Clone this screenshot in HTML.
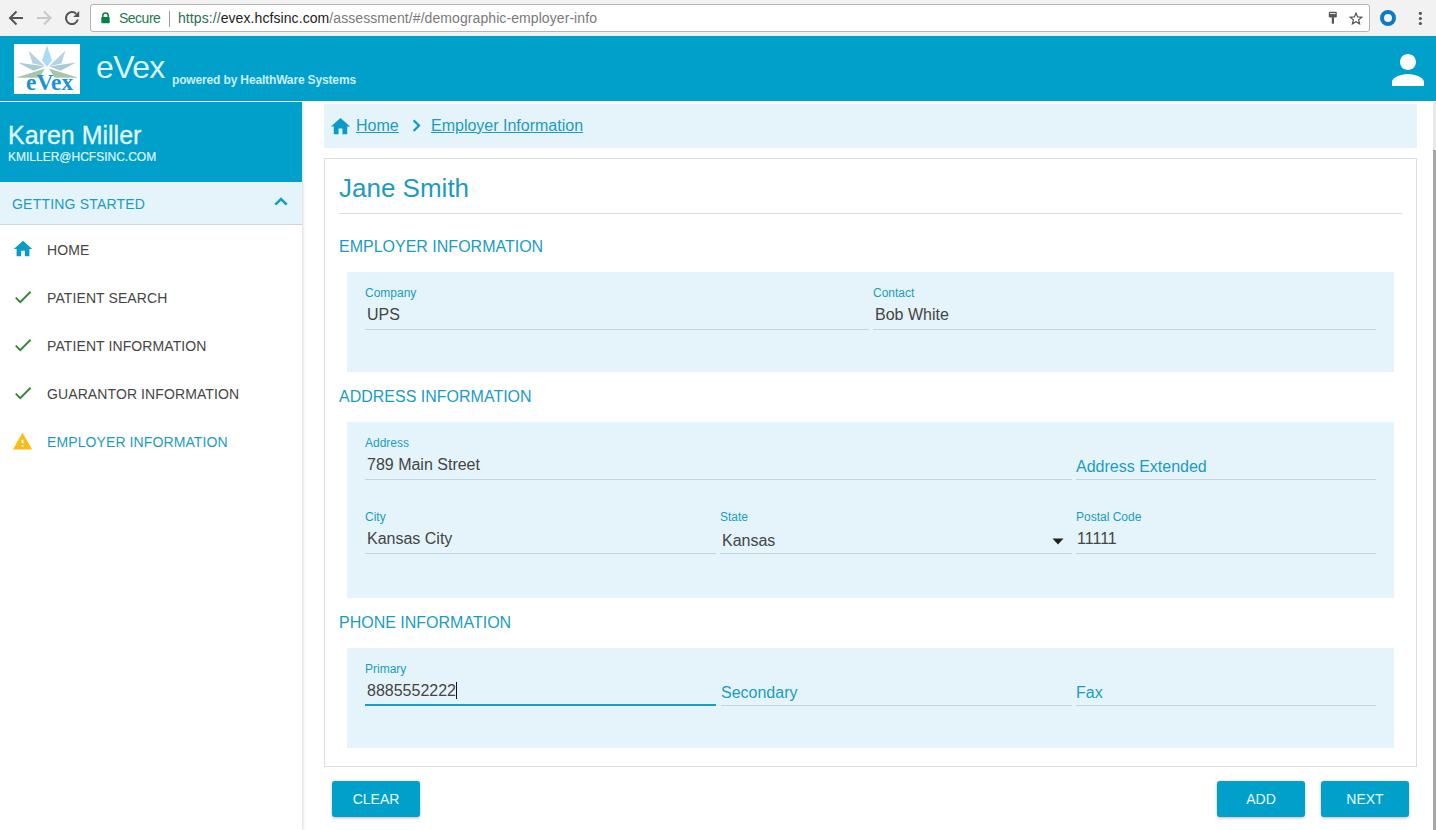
<!DOCTYPE html>
<html><head><meta charset="utf-8">
<style>
*{box-sizing:border-box;margin:0;padding:0}
html,body{width:1436px;height:830px;overflow:hidden;background:#fff;font-family:"Liberation Sans",sans-serif}
.abs{position:absolute;white-space:nowrap}
#chrome{position:absolute;left:0;top:0;width:1436px;height:35px;background:#f2f2f2}
#omni{position:absolute;left:90px;top:4px;width:1280px;height:28px;background:#fff;border:1px solid #b4b4b4;border-radius:3px}
#hdr{position:absolute;left:0;top:35px;width:1436px;height:66px;background:#01a0ca;border-top:1px solid #dff5fb}
#sep{position:absolute;left:0;top:101px;width:1436px;height:1px;background:#c8f4fa}
#side{position:absolute;left:0;top:102px;width:302px;height:728px;background:#fff;box-shadow:1px 0 3px rgba(0,0,0,.16)}
#user{position:absolute;left:0;top:0;width:302px;height:80px;background:#01a0ca}
#gs{position:absolute;left:0;top:80px;width:302px;height:43px;background:#e5f4fa;border-bottom:1px solid #c9d6dc}
.nav{position:absolute;left:47px;font-size:14px;color:#464646;letter-spacing:.1px;white-space:nowrap}
.ico{position:absolute}
.lbl{position:absolute;font-size:12px;color:#1a9cc2;white-space:nowrap}
.val{position:absolute;font-size:16px;color:#444;white-space:nowrap}
.ph{position:absolute;font-size:16px;color:#1a9cc2;white-space:nowrap}
.line{position:absolute;height:1px;background:#c3d5dc}
.panel{position:absolute;left:347px;width:1047px;background:#e5f4fa}
.sect{position:absolute;left:339px;font-size:16px;color:#1a9cc2;white-space:nowrap}
.btn{position:absolute;top:781px;height:36px;background:#01a0ca;color:#e6fbff;font-size:14px;text-align:center;line-height:36px;border-radius:3px;box-shadow:0 1px 3px rgba(0,0,0,.28)}
</style></head><body>
<div id="chrome">
  <svg class="ico" style="left:0;top:0" width="90" height="35" viewBox="0 0 90 35">
    <g fill="none" stroke="#555" stroke-width="2" stroke-linecap="butt">
      <path d="M23 18H10.5M16.5 11.5L10 18l6.5 6.5"/>
    </g>
    <g fill="none" stroke="#c8c8c8" stroke-width="2">
      <path d="M37 18h12.5M44 11.5l6.5 6.5-6.5 6.5"/>
    </g>
    <path d="M77.8 19.6A6 6 0 1 1 76.2 13.8" fill="none" stroke="#555" stroke-width="2"/>
    <path d="M79.2 11v5.9h-6z" fill="#555"/>
  </svg>
  <div id="omni">
    <svg class="ico" style="left:9px;top:7px" width="11" height="13" viewBox="0 0 11 13">
      <path d="M2.8 5V3.6a2.7 2.7 0 0 1 5.4 0V5" fill="none" stroke="#0b8043" stroke-width="1.5"/>
      <rect x="1.3" y="5" width="8.4" height="6.3" rx=".8" fill="#0b8043"/>
    </svg>
    <div class="abs" style="left:28px;top:5px;font-size:14px;color:#1f7a4e;letter-spacing:-.5px">Secure</div>
    <div class="abs" style="left:78px;top:6px;width:1px;height:16px;background:#999"></div>
    <div class="abs" style="left:87px;top:5px;font-size:14px;letter-spacing:.08px"><span style="color:#2a7050">https://</span><span style="color:#222">evex.hcfsinc.com</span><span style="color:#7a7a7a">/assessment/#/demographic-employer-info</span></div>
    <svg class="ico" style="left:1237px;top:6px" width="10" height="14" viewBox="0 0 10 14">
      <rect x="0.8" y="0.8" width="8" height="5.8" rx="1.3" fill="#555"/>
      <rect x="1.9" y="2" width="5.8" height="1.1" fill="#ddd"/>
      <rect x="3.8" y="6" width="2.2" height="6.8" rx=".9" fill="#555"/>
    </svg>
    <svg class="ico" style="left:1257.5px;top:6.5px" width="14" height="13.1" viewBox="0 0 16 15">
      <path d="M8 1.3l1.9 4.3 4.6.4-3.5 3 1.1 4.6L8 11.2 3.9 13.6 5 9 1.5 6l4.6-.4z" fill="none" stroke="#555" stroke-width="1.4" stroke-linejoin="miter"/>
    </svg>
  </div>
  <svg class="ico" style="left:1378px;top:8px" width="20" height="20" viewBox="0 0 20 20">
    <circle cx="10" cy="10" r="6" fill="none" stroke="#0a7bc4" stroke-width="4"/>
  </svg>
  <svg class="ico" style="left:1416px;top:10px" width="8" height="17" viewBox="0 0 8 17">
    <circle cx="4.4" cy="3.3" r="1.6" fill="#555"/><circle cx="4.4" cy="8.5" r="1.6" fill="#555"/><circle cx="4.4" cy="13.5" r="1.6" fill="#555"/>
  </svg>
</div>
<div id="hdr">
  <svg class="ico" style="left:14px;top:8px" width="66" height="50" viewBox="0 0 66 50">
    <rect width="66" height="50" fill="#fff"/>
    <polygon points="33,1.2 28,16.6 33,22.8 38,16.6" fill="#a9dbf4"/>
    <polygon points="14.5,6.5 18.6,19.4 31,22.2" fill="#b4d2e4"/>
    <polygon points="51.5,6.5 47.4,19.4 35,22.2" fill="#b4d2e4"/>
    <polygon points="4,18.4 30.5,22.6 19.4,26.8" fill="#a9cbd6"/>
    <polygon points="62,18.4 35.5,22.6 46.6,26.8" fill="#a9cbd6"/>
    <polygon points="1.6,33.7 31,24.4 25.5,33.7" fill="#a8c5ab"/>
    <polygon points="64.4,33.7 35,24.4 40.5,33.7" fill="#a8c5ab"/>
    <text x="35.6" y="46.3" text-anchor="middle" font-family="Liberation Serif" font-weight="bold" font-size="22.5" fill="#1c93d6" textLength="47" lengthAdjust="spacingAndGlyphs">eVex</text>
  </svg>
  <div class="abs" style="left:96px;top:13px;font-size:32px;letter-spacing:-.6px;color:#dcf5ff">eVex</div>
  <div class="abs" style="left:172px;top:37px;font-size:12px;letter-spacing:-.15px;font-weight:bold;color:#c8eefa">powered by HealthWare Systems</div>
  <svg class="ico" style="left:1384px;top:10px" width="48" height="48" viewBox="0 0 24 24">
    <path fill="#fff" d="M12 12c2.21 0 4-1.79 4-4s-1.79-4-4-4-4 1.79-4 4 1.79 4 4 4zm0 2c-2.67 0-8 1.34-8 4v2h16v-2c0-2.66-5.33-4-8-4z"/>
  </svg>
</div>
<div id="side">
  <div id="user">
    <div class="abs" style="left:8px;top:19px;font-size:25px;color:#e0f8ff;-webkit-text-stroke:.3px #e0f8ff">Karen Miller</div>
    <div class="abs" style="left:8px;top:48px;font-size:12px;color:#e0f8ff;-webkit-text-stroke:.15px #e0f8ff">KMILLER@HCFSINC.COM</div>
  </div>
  <div id="gs">
    <div class="abs" style="left:12px;top:14px;font-size:14px;color:#1a9cc2;letter-spacing:.2px">GETTING STARTED</div>
    <svg class="ico" style="left:270px;top:10px" width="22" height="16" viewBox="0 0 22 16">
      <path fill="none" stroke="#1a9cc2" stroke-width="2.6" d="M5.3 12.6L11 7l5.7 5.6"/>
    </svg>
  </div>
  <svg class="ico" style="left:12px;top:136px" width="22" height="22" viewBox="0 0 24 24"><path fill="#0a9cc8" d="M10 20v-6h4v6h5v-8h3L12 3 2 12h3v8z"/></svg>
  <div class="nav" style="top:140px">HOME</div>
  <svg class="ico" style="left:12px;top:184px" width="22" height="22" viewBox="0 0 24 24"><path fill="#37863c" d="M9 16.17L4.83 12l-1.42 1.41L9 19 21 7l-1.41-1.41z"/></svg>
  <div class="nav" style="top:188px">PATIENT SEARCH</div>
  <svg class="ico" style="left:12px;top:232px" width="22" height="22" viewBox="0 0 24 24"><path fill="#37863c" d="M9 16.17L4.83 12l-1.42 1.41L9 19 21 7l-1.41-1.41z"/></svg>
  <div class="nav" style="top:236px">PATIENT INFORMATION</div>
  <svg class="ico" style="left:12px;top:280px" width="22" height="22" viewBox="0 0 24 24"><path fill="#37863c" d="M9 16.17L4.83 12l-1.42 1.41L9 19 21 7l-1.41-1.41z"/></svg>
  <div class="nav" style="top:284px">GUARANTOR INFORMATION</div>
  <svg class="ico" style="left:12px;top:329px" width="21" height="21" viewBox="0 0 24 24"><path fill="#fbbc17" d="M1 21h22L12 2 1 21zm12-3h-2v-2h2v2zm0-4h-2v-4h2v4z"/></svg>
  <div class="nav" style="top:332px;color:#1a9cc2">EMPLOYER INFORMATION</div>
</div>

<!-- breadcrumb -->
<div class="abs" style="left:324px;top:104px;width:1093px;height:44px;background:#e5f4fa"></div>
<svg class="ico" style="left:329px;top:115px" width="23" height="23" viewBox="0 0 24 24"><path fill="#0a9cc8" d="M10 20v-6h4v6h5v-8h3L12 3 2 12h3v8z"/></svg>
<div class="abs" style="left:356px;top:117px;font-size:16px;color:#1a9cc2;text-decoration:underline">Home</div>
<svg class="ico" style="left:404px;top:113px" width="24" height="24" viewBox="0 0 24 24"><path fill="none" stroke="#1a9cc2" stroke-width="2.3" d="M9.6 7.2L15 12.6 9.6 18"/></svg>
<div class="abs" style="left:431px;top:117px;font-size:16px;color:#1a9cc2;text-decoration:underline">Employer Information</div>

<!-- card -->
<div class="abs" style="left:324px;top:158px;width:1093px;height:609px;border:1px solid #dcdcdc"></div>
<div class="abs" style="left:339px;top:173px;font-size:26px;color:#1a9cc2">Jane Smith</div>
<div class="abs" style="left:339px;top:213px;width:1063px;height:1px;background:#dcdcdc"></div>

<div class="sect" style="top:238px">EMPLOYER INFORMATION</div>
<div class="panel" style="top:272px;height:100px"></div>
<div class="lbl" style="left:365px;top:286px">Company</div>
<div class="val" style="left:367px;top:306px">UPS</div>
<div class="line" style="left:365px;top:329px;width:504px"></div>
<div class="lbl" style="left:873px;top:286px">Contact</div>
<div class="val" style="left:875px;top:306px">Bob White</div>
<div class="line" style="left:873px;top:329px;width:503px"></div>

<div class="sect" style="top:388px">ADDRESS INFORMATION</div>
<div class="panel" style="top:422px;height:176px"></div>
<div class="lbl" style="left:365px;top:436px">Address</div>
<div class="val" style="left:367px;top:456px">789 Main Street</div>
<div class="line" style="left:365px;top:479px;width:707px"></div>
<div class="ph" style="left:1076px;top:458px">Address Extended</div>
<div class="line" style="left:1076px;top:479px;width:300px"></div>

<div class="lbl" style="left:365px;top:510px">City</div>
<div class="val" style="left:367px;top:530px">Kansas City</div>
<div class="line" style="left:365px;top:553px;width:351px"></div>
<div class="lbl" style="left:720px;top:510px">State</div>
<div class="val" style="left:722px;top:532px">Kansas</div>
<svg class="ico" style="left:1052px;top:538px" width="12" height="7" viewBox="0 0 12 7"><path d="M0.5 0.5h11L6 6.5z" fill="#222"/></svg>
<div class="line" style="left:720px;top:553px;width:352px"></div>
<div class="lbl" style="left:1076px;top:510px">Postal Code</div>
<div class="val" style="left:1077px;top:530px">11111</div>
<div class="line" style="left:1076px;top:553px;width:300px"></div>

<div class="sect" style="top:614px">PHONE INFORMATION</div>
<div class="panel" style="top:648px;height:100px"></div>
<div class="lbl" style="left:365px;top:662px">Primary</div>
<div class="val" style="left:367px;top:682px">8885552222</div>
<div class="abs" style="left:456px;top:682px;width:1px;height:17px;background:#111"></div>
<div class="abs" style="left:365px;top:704px;width:351px;height:2px;background:#12a0c8"></div>
<div class="ph" style="left:721px;top:684px">Secondary</div>
<div class="line" style="left:721px;top:705px;width:351px"></div>
<div class="ph" style="left:1076px;top:684px">Fax</div>
<div class="line" style="left:1076px;top:705px;width:300px"></div>

<div class="btn" style="left:332px;width:88px">CLEAR</div>
<div class="btn" style="left:1217px;width:88px">ADD</div>
<div class="btn" style="left:1321px;width:88px">NEXT</div>

<!-- scrollbar -->
<div class="abs" style="left:1433px;top:102px;width:3px;height:728px;background:#e8e8e8"></div>
<div class="abs" style="left:1433px;top:150px;width:3px;height:680px;background:#a6a6a6"></div>
</body></html>
